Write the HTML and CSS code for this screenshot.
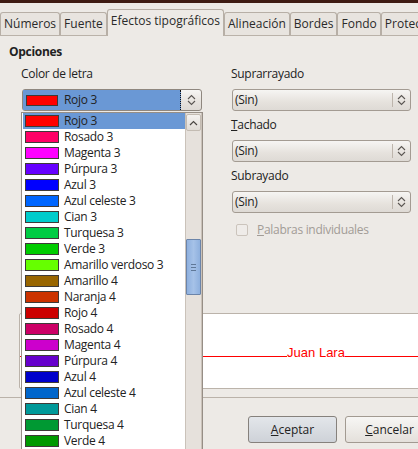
FILE: index.html
```html
<!DOCTYPE html>
<html lang="es">
<head>
<meta charset="utf-8">
<title>Efectos tipográficos</title>
<link rel="stylesheet" href="styles.css">
</head>
<body>
<div class="window">
  <div class="topbar"></div>
  <div class="tabs">
    <div class="tab">Números</div>
    <div class="tab">Fuente</div>
    <div class="tab active">Efectos tipográficos</div>
    <div class="tab">Alineación</div>
    <div class="tab">Bordes</div>
    <div class="tab">Fondo</div>
    <div class="tab">Protección</div>
  </div>
  <div class="panel">
    <div class="heading">Opciones</div>
    <div class="cols">
      <div class="col col-left">
        <div class="label">Color de letra</div>
        <div class="combo combo-focus">
          <div class="combo-value selected"><span class="swatch swatch-combo" style="background:#ff0000"></span>Rojo 3</div>
          <div class="combo-btn">
            <svg width="9" height="12" viewBox="0 0 9 12"><polyline points="1,5 4.5,1.5 8,5" fill="none" stroke="#5a5652" stroke-width="1.1"/><polyline points="1,7 4.5,10.5 8,7" fill="none" stroke="#5a5652" stroke-width="1.1"/></svg>
          </div>
        </div>
      </div>
      <div class="col col-right">
        <div class="label">Suprarrayado</div>
        <div class="combo">
          <div class="combo-value">(Sin)</div>
          <div class="combo-btn sep">
            <svg width="9" height="12" viewBox="0 0 9 12"><polyline points="1,5 4.5,1.5 8,5" fill="none" stroke="#5a5652" stroke-width="1.1"/><polyline points="1,7 4.5,10.5 8,7" fill="none" stroke="#5a5652" stroke-width="1.1"/></svg>
          </div>
        </div>
        <div class="label gap"><u>T</u>achado</div>
        <div class="combo">
          <div class="combo-value">(Sin)</div>
          <div class="combo-btn sep">
            <svg width="9" height="12" viewBox="0 0 9 12"><polyline points="1,5 4.5,1.5 8,5" fill="none" stroke="#5a5652" stroke-width="1.1"/><polyline points="1,7 4.5,10.5 8,7" fill="none" stroke="#5a5652" stroke-width="1.1"/></svg>
          </div>
        </div>
        <div class="label gap">Subrayado</div>
        <div class="combo">
          <div class="combo-value">(Sin)</div>
          <div class="combo-btn sep">
            <svg width="9" height="12" viewBox="0 0 9 12"><polyline points="1,5 4.5,1.5 8,5" fill="none" stroke="#5a5652" stroke-width="1.1"/><polyline points="1,7 4.5,10.5 8,7" fill="none" stroke="#5a5652" stroke-width="1.1"/></svg>
          </div>
        </div>
        <div class="check disabled"><span class="box"></span><span><u>P</u>alabras individuales</span></div>
      </div>
    </div>
    <div class="preview">
      <div class="pv-line"></div>
      <span class="pv-text">Juan Lara</span>
      <div class="pv-line"></div>
    </div>
  </div>
  <div class="buttons">
    <div class="btn btn-default"><u>A</u>ceptar</div>
    <div class="btn"><u>C</u>ancelar</div>
  </div>

  <div class="popup">
    <ul class="list">
      <li class="item selected"><span class="swatch" style="background:#ff0000"></span>Rojo 3</li>
      <li class="item"><span class="swatch" style="background:#ff0066"></span>Rosado 3</li>
      <li class="item"><span class="swatch" style="background:#ff00ff"></span>Magenta 3</li>
      <li class="item"><span class="swatch" style="background:#6600ff"></span>Púrpura 3</li>
      <li class="item"><span class="swatch" style="background:#0000ff"></span>Azul 3</li>
      <li class="item"><span class="swatch" style="background:#0066ff"></span>Azul celeste 3</li>
      <li class="item"><span class="swatch" style="background:#00cccc"></span>Cian 3</li>
      <li class="item"><span class="swatch" style="background:#00cc44"></span>Turquesa 3</li>
      <li class="item"><span class="swatch" style="background:#00cc00"></span>Verde 3</li>
      <li class="item"><span class="swatch" style="background:#66ff00"></span>Amarillo verdoso 3</li>
      <li class="item"><span class="swatch" style="background:#996600"></span>Amarillo 4</li>
      <li class="item"><span class="swatch" style="background:#cc3300"></span>Naranja 4</li>
      <li class="item"><span class="swatch" style="background:#cc0000"></span>Rojo 4</li>
      <li class="item"><span class="swatch" style="background:#cc0066"></span>Rosado 4</li>
      <li class="item"><span class="swatch" style="background:#cc00cc"></span>Magenta 4</li>
      <li class="item"><span class="swatch" style="background:#6600cc"></span>Púrpura 4</li>
      <li class="item"><span class="swatch" style="background:#0000cc"></span>Azul 4</li>
      <li class="item"><span class="swatch" style="background:#0066cc"></span>Azul celeste 4</li>
      <li class="item"><span class="swatch" style="background:#009999"></span>Cian 4</li>
      <li class="item"><span class="swatch" style="background:#009933"></span>Turquesa 4</li>
      <li class="item"><span class="swatch" style="background:#009900"></span>Verde 4</li>
    </ul>
    <div class="scrollbar">
      <div class="sb-btn">
        <svg width="9" height="6" viewBox="0 0 9 6"><polyline points="1,5 4.5,1.5 8,5" fill="none" stroke="#4a4642" stroke-width="1.2"/></svg>
      </div>
      <div class="sb-thumb"><span></span><span></span><span></span></div>
    </div>
  </div>
</div>
</body>
</html>
```

FILE: styles.css
```css
html, body {
  margin: 0;
  padding: 0;
}

body {
  width: 418px;
  height: 449px;
  overflow: hidden;
  background: #edeae6;
  font-family: "Open Sans", "Noto Sans", sans-serif;
  font-size: 12px;
  letter-spacing: -0.3px;
  color: #222;
}

.window {
  position: relative;
  height: 449px;
  overflow: hidden;
}

.topbar {
  height: 3px;
  background: #3f1c14;
}

/* Tabs */
.tabs {
  display: flex;
  align-items: flex-end;
  height: 32px;
  gap: 0;
}

.tab {
  padding: 3px 3px 0;
  box-sizing: border-box;
  height: 23px;
  line-height: 16px;
  letter-spacing: 0;
  border: 1px solid #b7afa6;
  border-bottom: none;
  border-radius: 3px 3px 0 0;
  background: #e8e4df;
  white-space: nowrap;
  color: #2a2a2a;
}

.tab.active {
  position: relative;
  z-index: 1;
  height: 27px;
  margin-bottom: -1px;
  background: #edeae6;
}

/* Panel */
.panel {
  height: 361px;
  border-top: 1px solid #bab2a9;
  border-bottom: 1px solid #bab2a9;
}

.heading {
  padding: 8px 0 0 9px;
  line-height: 16px;
  font-weight: bold;
}

.cols {
  display: flex;
  margin-top: 6px;
  padding-left: 21px;
  gap: 29px;
}

.col {
  display: flex;
  flex-direction: column;
}

.col-left {
  width: 181px;
}

.col-right {
  width: 180px;
}

.label {
  line-height: 16px;
}

.label.gap {
  margin-top: 6px;
}

.combo {
  display: flex;
  height: 22px;
  box-sizing: border-box;
  margin: 7px 0 0 1px;
  border: 1px solid #a39b92;
  border-radius: 3px;
  background: linear-gradient(#f6f5f3, #e6e2dd 60%, #dedad5);
}

.combo-value {
  flex: 1;
  display: flex;
  align-items: center;
  padding-left: 2px;
  line-height: 16px;
  white-space: nowrap;
}

.combo-btn {
  width: 17px;
  display: flex;
  align-items: center;
  justify-content: center;
}

.combo-btn.sep {
  border-left: 1px solid #bdb5ac;
  margin: 3px 0;
}

.combo-focus {
  border-color: #8f877f;
}

.combo-focus .combo-value {
  background: #6a98d5;
  padding-left: 3px;
  border-right: 1px dotted #111;
}

.combo-focus .combo-btn {
  width: 20px;
}

.swatch {
  display: inline-block;
  width: 32px;
  height: 10px;
  border: 1px solid #3e3a38;
  margin-right: 5px;
  flex: none;
}

.swatch-combo {
  width: 30px;
  height: 9px;
  margin-right: 6px;
}

.check {
  display: flex;
  align-items: center;
  margin-top: 9px;
  padding-left: 5px;
  line-height: 16px;
}

.check .box {
  width: 10px;
  height: 10px;
  border: 1px solid #cbc4bc;
  border-radius: 2px;
  background: #efece9;
  margin-right: 9px;
}

.check.disabled {
  color: #a29c96;
}

/* Preview */
.preview {
  display: flex;
  align-items: flex-end;
  box-sizing: border-box;
  width: 594px;
  height: 76px;
  margin: 75px 0 0 19px;
  padding-bottom: 28px;
  border: 1px solid #bbb3aa;
  border-radius: 2px;
  background: #fff;
}

.pv-line {
  flex: 1;
  border-bottom: 1px solid #ff0000;
  margin-bottom: 3px;
}

.pv-text {
  font-family: "Liberation Sans", Arial, sans-serif;
  font-size: 13px;
  line-height: 15px;
  letter-spacing: 0;
  color: #ff0000;
}

/* Buttons */
.buttons {
  display: flex;
  gap: 8px;
  padding: 18px 0 0 248px;
}

.btn {
  flex: none;
  width: 89px;
  height: 27px;
  box-sizing: border-box;
  display: flex;
  align-items: center;
  justify-content: center;
  letter-spacing: 0;
  border: 1px solid #a29a91;
  border-radius: 3px;
  background: linear-gradient(#f7f6f4, #e4e0db);
  color: #222;
}

.btn-default {
  border-color: #86817c;
  background: linear-gradient(#e3e6ea, #ced2d8);
}

/* Popup list */
.popup {
  position: absolute;
  left: 21px;
  top: 112px;
  width: 182px;
  height: 345px;
  box-sizing: border-box;
  display: flex;
  border: 1px solid #968e86;
  border-bottom: none;
  background: #fff;
}

.list {
  flex: 1;
  margin: 0;
  padding: 0;
  list-style: none;
}

.item {
  display: flex;
  align-items: center;
  height: 16px;
  padding-left: 3px;
  line-height: 14px;
  white-space: nowrap;
}

.item.selected {
  background: #6a98d5;
  margin-left: 1px;
  padding-left: 2px;
}

.scrollbar {
  position: relative;
  width: 15px;
  background: #e6e1dc;
  border-left: 1px solid #cac2b9;
  border-right: 1px solid #cac2b9;
}

.sb-btn {
  height: 15px;
  margin-top: 1px;
  border: 1px solid #c3bbb2;
  border-radius: 2px;
  background: linear-gradient(#f4f2f0, #e0dbd6);
  display: flex;
  align-items: center;
  justify-content: center;
}

.sb-thumb {
  position: absolute;
  left: 0;
  top: 126px;
  width: 13px;
  height: 54px;
  border: 1px solid #6b84a9;
  border-radius: 1px;
  background: linear-gradient(90deg, #8eb0de, #a6c2e8 50%, #8eb0de);
  display: flex;
  flex-direction: column;
  align-items: center;
  justify-content: center;
  gap: 2px;
}

.sb-thumb span {
  width: 5px;
  height: 1px;
  background: #5f7898;
}
```
